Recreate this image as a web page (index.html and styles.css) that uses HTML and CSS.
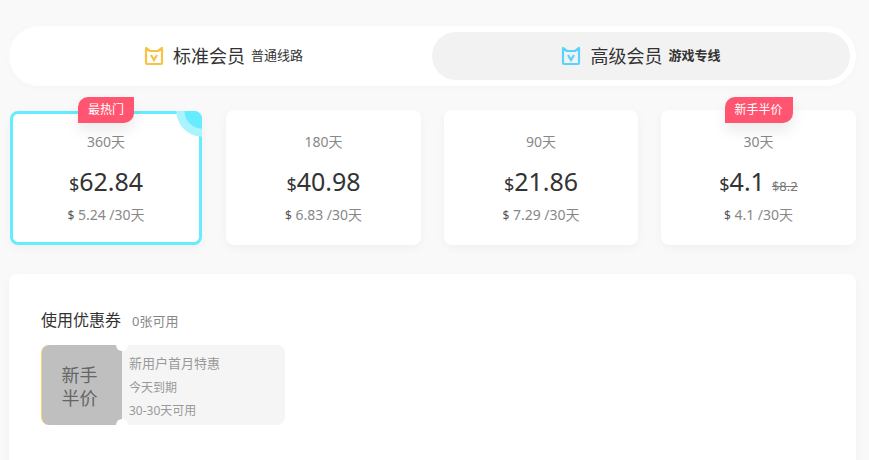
FILE: index.html
```html
<!DOCTYPE html>
<html lang="zh-CN">
<head>
  <meta charset="UTF-8">
  <title>会员套餐</title>
  <link rel="stylesheet" href="styles.css">
</head>
<body>
  <div class="tabs">
    <div class="tab">
      <svg class="tab-icon" viewBox="0 0 20 20"><path d="M2 2l4 3h8l4-3v15a1 1 0 0 1-1 1H3a1 1 0 0 1-1-1z" fill="none" stroke="#f7c246" stroke-width="2.2" stroke-linejoin="round"/><path d="M7 9l3 5 3-5" fill="none" stroke="#f7c246" stroke-width="2.2"/></svg>
      <span class="tab-name">标准会员</span>
      <span class="tab-sub">普通线路</span>
    </div>
    <div class="tab active">
      <svg class="tab-icon" viewBox="0 0 20 20"><path d="M2 2l4 3h8l4-3v15a1 1 0 0 1-1 1H3a1 1 0 0 1-1-1z" fill="none" stroke="#5ad2fb" stroke-width="2.2" stroke-linejoin="round"/><path d="M7 9l3 5 3-5" fill="none" stroke="#5ad2fb" stroke-width="2.2"/></svg>
      <span class="tab-name">高级会员</span>
      <span class="tab-sub">游戏专线</span>
    </div>
  </div>

  <div class="plans">
    <div class="plan selected">
      <span class="badge">最热门</span>
      <span class="corner"></span>
      <div class="days">360天</div>
      <div class="price"><small>$</small>62.84</div>
      <div class="monthly"><b>$</b> 5.24 /30天</div>
    </div>
    <div class="plan">
      <div class="days">180天</div>
      <div class="price"><small>$</small>40.98</div>
      <div class="monthly"><b>$</b> 6.83 /30天</div>
    </div>
    <div class="plan">
      <div class="days">90天</div>
      <div class="price"><small>$</small>21.86</div>
      <div class="monthly"><b>$</b> 7.29 /30天</div>
    </div>
    <div class="plan">
      <span class="badge">新手半价</span>
      <div class="days">30天</div>
      <div class="price"><small>$</small>4.1<s>$8.2</s></div>
      <div class="monthly"><b>$</b> 4.1 /30天</div>
    </div>
  </div>

  <div class="panel">
    <div class="panel-title">使用优惠券<span>0张可用</span></div>
    <div class="coupon">
      <div class="coupon-left">新手<br>半价</div>
      <div class="coupon-right">
        <p>新用户首月特惠</p>
        <p>今天到期</p>
        <p>30-30天可用</p>
      </div>
    </div>
    <div class="panel-title pay">选择支付方式</div>
  </div>
</body>
</html>
```

FILE: styles.css
```css
html, body {
  height: 100%;
  overflow: hidden;
}

body {
  margin: 0;
  padding: 26px 13px 0 9px;
  box-sizing: border-box;
  background-color: #f9f9f9;
  font-family: "Noto Sans", "Noto Sans CJK SC", sans-serif;
  color: #333;
}

.tabs {
  display: flex;
  height: 60px;
  padding: 6px;
  box-sizing: border-box;
  background: #fff;
  border-radius: 30px;
  box-shadow: 0 2px 8px rgba(0, 0, 0, 0.02);
}

.tab {
  flex: 1;
  display: flex;
  align-items: center;
  justify-content: center;
  padding-bottom: 3px;
  box-sizing: border-box;
  border-radius: 24px;
  color: #333;
}

.tab.active {
  flex: 0 0 418px;
  background: #f2f2f2;
}

.tab-icon {
  width: 20px;
  height: 20px;
  margin: 3px 9px 0 0;
}

.tab-name {
  font-size: 18px;
  margin-right: 6px;
}

.tab-sub {
  font-size: 13px;
}

.tab.active .tab-sub {
  font-weight: 700;
}

.plans {
  display: grid;
  grid-template-columns: 193px 195px 194px 195px;
  column-gap: 23px;
  margin: 24px 0 29px 1px;
}

.plan {
  position: relative;
  height: 135px;
  padding-top: 22px;
  box-sizing: border-box;
  background: #fff;
  border-radius: 8px;
  text-align: center;
  box-shadow: 0 3px 10px rgba(0, 0, 0, 0.04);
}

.plan.selected {
  height: 134px;
  margin: 1px 1px 0 0;
  padding-top: 18px;
  border: 3px solid #66ecff;
}

.badge {
  position: absolute;
  top: -13px;
  left: 50%;
  transform: translateX(-50%);
  padding: 0 10px;
  height: 26px;
  line-height: 26px;
  background: #ff5570;
  color: #fff;
  font-size: 12px;
  white-space: nowrap;
  border-radius: 10px 0 10px 0;
  box-shadow: 0 8px 14px rgba(0, 0, 0, 0.08);
}

.plan.selected .badge {
  top: -17px;
}

.corner {
  position: absolute;
  top: -3px;
  right: -3px;
  width: 26px;
  height: 26px;
  border-top-right-radius: 8px;
  background: radial-gradient(circle at 100% 0, #66ecff 17px, #aaf3ff 18px, #aaf3ff 25px, transparent 26px);
}

.days {
  font-size: 14px;
  line-height: 20px;
  color: #888;
}

.price {
  margin-top: 11px;
  font-size: 25px;
  line-height: 36px;
  color: #333;
}

.price small {
  font-size: 18px;
}

.price s {
  margin-left: 7px;
  font-size: 13px;
  line-height: 1;
  color: #777;
}

.monthly {
  margin-top: 3px;
  font-size: 14px;
  line-height: 20px;
  color: #888;
}

.monthly b {
  font-size: 12px;
  font-weight: 400;
  color: #555;
}

.panel {
  background: #fff;
  border-radius: 8px 8px 0 0;
  padding: 35px 32px 0;
  height: 300px;
  box-sizing: border-box;
  box-shadow: 0 3px 10px rgba(0, 0, 0, 0.04);
}

.panel-title {
  font-size: 16px;
  line-height: 22px;
  color: #333;
}

.panel-title span {
  margin-left: 11px;
  font-size: 13px;
  color: #888;
}

.panel-title.pay {
  margin-top: 34px;
}

.coupon {
  display: flex;
  width: 244px;
  height: 80px;
  margin-top: 13px;
}

.coupon-left {
  position: relative;
  width: 81px;
  box-sizing: border-box;
  display: flex;
  align-items: center;
  justify-content: center;
  padding: 3px 5px 0 0;
  background: #bfbfbf;
  border-left: 1px solid #f7d568;
  border-radius: 8px 0 0 8px;
  text-align: center;
  font-size: 18px;
  line-height: 23px;
  color: #666;
}

.coupon-left::before,
.coupon-left::after {
  content: "";
  position: absolute;
  right: -6px;
  width: 12px;
  height: 12px;
  background: #fff;
  border-radius: 50%;
}

.coupon-left::before {
  top: -6px;
}

.coupon-left::after {
  bottom: -6px;
}

.coupon-right {
  flex: 1;
  padding: 8px 0 0 7px;
  background: #f5f5f5;
  border-radius: 0 8px 8px 0;
  font-size: 12px;
  color: #999;
}

.coupon-right p {
  margin: 0;
  line-height: 23px;
}

.coupon-right p:first-child {
  margin-bottom: 2px;
  font-size: 13px;
  line-height: 21px;
}
```
